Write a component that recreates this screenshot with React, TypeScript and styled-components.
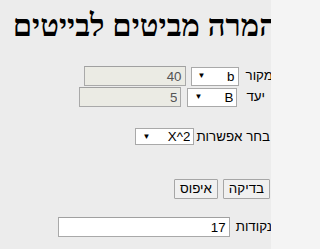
import React from "react";
import styled, { createGlobalStyle } from "styled-components";

const Global = createGlobalStyle`
  html, body {
    margin: 0;
    padding: 0;
    background: #f4f4f4;
  }
  body {
    font-family: "Liberation Sans", Arial, sans-serif;
  }
`;

const Frame = styled.div`
  width: 271px;
  height: 249px;
  overflow: hidden;
  background: #ececec;
`;

const Page = styled.div`
  width: 277px;
  direction: rtl;
  font-family: "Liberation Sans", Arial, sans-serif;
  font-size: 13.33px;
  color: #000;
`;

const Title = styled.h1`
  margin: 6px 0 0 0;
  height: 40px;
  line-height: 40px;
  font-family: "Liberation Serif", "Times New Roman", serif;
  font-size: 31px;
  font-weight: bold;
  white-space: nowrap;
`;

const Form = styled.div`
  padding-right: 4px;
`;

const Row = styled.div<{ $top: number; $height: number; $gap?: number; $pad?: number }>`
  display: flex;
  align-items: center;
  margin-top: ${(p) => p.$top}px;
  height: ${(p) => p.$height}px;
  gap: ${(p) => p.$gap ?? 0}px;
  padding-right: ${(p) => p.$pad ?? 0}px;
  white-space: nowrap;
`;

const Label = styled.span<{ $space?: number; $pad?: number }>`
  margin-left: ${(p) => p.$space ?? 4}px;
  padding-right: ${(p) => p.$pad ?? 0}px;
  line-height: 16px;
`;

const Field = styled.input<{ $width: number; $gapRight?: number }>`
  box-sizing: border-box;
  width: ${(p) => p.$width}px;
  height: 20px;
  margin: 0;
  margin-right: ${(p) => p.$gapRight ?? 0}px;
  padding: 0 3px;
  border: 1px solid #a9a9a9;
  border-top-color: #a0a0a0;
  font-family: "Liberation Sans", Arial, sans-serif;
  font-size: 13.33px;
  text-align: right;
  direction: rtl;
  background: ${(p) => (p.disabled ? "#ebebe4" : "#ffffff")};
  color: ${(p) => (p.disabled ? "#545454" : "#000000")};
  outline: none;
`;

const SelectWrap = styled.div<{ $width: number; $height: number }>`
  position: relative;
  width: ${(p) => p.$width}px;
  height: ${(p) => p.$height}px;
`;

const NativeSelect = styled.select`
  box-sizing: border-box;
  appearance: none;
  -webkit-appearance: none;
  width: 100%;
  height: 100%;
  margin: 0;
  padding: 0 3px 0 14px;
  border: 1px solid #a9a9a9;
  border-radius: 0;
  background: #ffffff;
  font-family: "Liberation Sans", Arial, sans-serif;
  font-size: 13.33px;
  color: #000;
  direction: rtl;
  text-align: right;
  outline: none;
`;

const Arrow = styled.span`
  position: absolute;
  left: 7px;
  top: 50%;
  transform: translateY(-50%);
  font-size: 8px;
  line-height: 8px;
  color: #000;
  pointer-events: none;
`;

const Button = styled.button`
  box-sizing: border-box;
  height: 20px;
  margin: 0;
  padding: 0 5px;
  border: 1px solid #a6a6a6;
  border-radius: 1px;
  background: #f0f0f0;
  font-family: "Liberation Sans", Arial, sans-serif;
  font-size: 13.33px;
  color: #000;
  line-height: 16px;
`;

function Select({ width, height, value, options }: { width: number; height: number; value: string; options: string[] }) {
  return (
    <SelectWrap $width={width} $height={height}>
      <NativeSelect defaultValue={value}>
        {options.map((o) => (
          <option key={o} value={o}>
            {o}
          </option>
        ))}
      </NativeSelect>
      <Arrow>▼</Arrow>
    </SelectWrap>
  );
}

export default function App() {
  return (
    <>
      <Global />
      <Frame>
        <Page>
          <Title>המרה מביטים לבייטים</Title>
          <Form>
            <Row $top={20} $height={20}>
              <Label $space={7}>מקור</Label>
              <Select width={48} height={19} value="b" options={["b", "B", "KB", "MB"]} />
              <Field $width={102} $gapRight={5} disabled value="40" readOnly />
            </Row>
            <Row $top={1} $height={20}>
              <Label $space={9} $pad={8}>יעד</Label>
              <Select width={50} height={19} value="B" options={["b", "B", "KB", "MB"]} />
              <Field $width={102} $gapRight={6} disabled value="5" readOnly />
            </Row>
            <Row $top={21} $height={17}>
              <Label $space={2} $pad={3}>בחר אפשרות</Label>
              <Select width={59} height={17} value="X^2" options={["X^2", "X/2"]} />
            </Row>
            <Row $top={34} $height={20} $gap={5} $pad={3}>
              <Button>בדיקה</Button>
              <Button>איפוס</Button>
            </Row>
            <Row $top={18} $height={20}>
              <Label $space={6} $pad={1}>נקודות</Label>
              <Field $width={172} value="17" readOnly />
            </Row>
          </Form>
        </Page>
      </Frame>
    </>
  );
}
